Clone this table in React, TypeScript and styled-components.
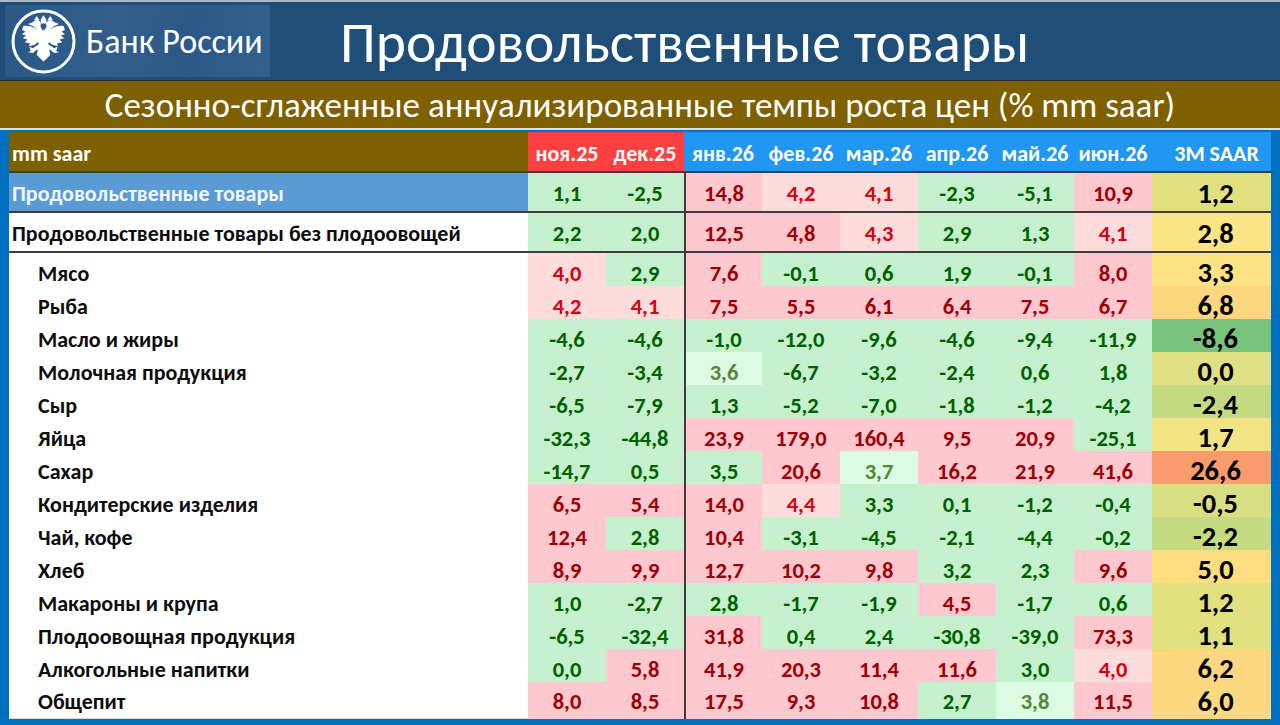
import React from "react";
import styled, { createGlobalStyle } from "styled-components";

const GlobalStyle = createGlobalStyle`
  html, body { margin: 0; padding: 0; background: #0070c0; }
  body { font-family: "Carlito", "Roboto", "Noto Sans", sans-serif; }
  * { box-sizing: border-box; }
`;

const COLS = "519px repeat(8, 78px) 119px";

const Slide = styled.div`
  width: 1280px;
  height: 725px;
  display: flex;
  flex-direction: column;
  overflow: hidden;
  background: #0070c0;
`;

const TopBar = styled.header`
  height: 80px;
  flex: none;
  background: #1f4e79;
  border-top: 2px solid #aeb8c2;
  display: flex;
  align-items: center;
  padding-left: 5px;
`;

const LogoBox = styled.div`
  width: 265px;
  height: 72px;
  display: flex;
  align-items: center;
  gap: 9px;
  padding-left: 5px;
  background: linear-gradient(100deg, #2a5987 0%, #315e8b 40%, #2c5a88 70%, #33618e 100%);
`;

const LogoText = styled.span`
  color: #ffffff;
  font-size: 34px;
  font-weight: 400;
  white-space: nowrap;
`;

const Title = styled.h1`
  margin: 0 0 0 70px;
  padding-top: 2px;
  color: #ffffff;
  font-size: 57.5px;
  font-weight: 400;
  white-space: nowrap;
`;

const SubBand = styled.div`
  height: 48px;
  flex: none;
  background: #7f6000;
  border-top: 1px solid #2a2a2a;
  display: flex;
  align-items: center;
  justify-content: center;
  color: #ffffff;
  font-size: 35px;
  font-weight: 400;
  white-space: nowrap;
`;

const Frame = styled.section`
  flex: 1;
  border-top: 2px solid #d3e2f1;
  padding: 2px 9px 10px 9px;
  background: #0070c0;
`;

const Table = styled.div`
  display: flex;
  flex-direction: column;
  background: #ffffff;
`;

const Row = styled.div<{ $h: number; $rule?: boolean }>`
  display: grid;
  grid-template-columns: ${COLS};
  height: ${(p) => p.$h}px;
  border-bottom: ${(p) => (p.$rule ? "2px solid #3d3d3d" : "none")};
`;

const HeadLabel = styled.div`
  background: #7f6000;
  color: #ffffff;
  font-weight: 700;
  font-size: 22px;
  display: flex;
  align-items: center;
  padding: 3px 0 0 3px;
`;

const HeadMonth = styled.div<{ $past?: boolean; $wide?: boolean }>`
  background: ${(p) => (p.$past ? "#ff4040" : "#2196f3")};
  color: #ffffff;
  font-weight: 700;
  font-size: 22px;
  display: flex;
  align-items: center;
  justify-content: center;
  padding: 3px 0 0 ${(p) => (p.$wide ? "10px" : "0")};
  white-space: nowrap;
`;

const Label = styled.div<{ $kind: "total" | "main" | "sub" }>`
  display: flex;
  align-items: center;
  padding: 2px 0 0 ${(p) => (p.$kind === "sub" ? "29px" : "3px")};
  font-weight: 700;
  font-size: 22px;
  white-space: nowrap;
  background: ${(p) => (p.$kind === "total" ? "#5b9bd5" : "#ffffff")};
  color: ${(p) => (p.$kind === "total" ? "#f2f6ff" : "#0d0d0d")};
  border-bottom: ${(p) => (p.$kind === "sub" ? "1px solid #d9d9d9" : "none")};
`;

type Tone = "green" | "lgreen" | "lpink" | "pink";

const toneBg: Record<Tone, string> = {
  green: "#c6efce",
  lgreen: "#dbfbe3",
  lpink: "#ffdcdc",
  pink: "#ffc7ce",
};
const toneFg: Record<Tone, string> = {
  green: "#006100",
  lgreen: "#5a8438",
  lpink: "#d80012",
  pink: "#9c0006",
};

const Value = styled.div<{ $tone: Tone; $split?: boolean }>`
  display: flex;
  align-items: center;
  justify-content: center;
  padding-top: 2px;
  font-weight: 700;
  font-size: 22.5px;
  background: ${(p) => toneBg[p.$tone]};
  color: ${(p) => toneFg[p.$tone]};
  border-left: ${(p) => (p.$split ? "2px solid #3d3d3d" : "none")};
`;

const Saar = styled.div<{ $bg: string; $rule?: boolean }>`
  display: flex;
  align-items: center;
  justify-content: center;
  padding: 2px 0 0 8px;
  font-weight: 700;
  font-size: 28.5px;
  color: #000000;
  background: ${(p) => p.$bg};
  border-bottom: ${(p) => (p.$rule ? "2px solid #2e2e2e" : "none")};
`;

const Eagle = () => {
  const half = (
    <>
      <path d="M45 38 C39 30 30 25 20 27 L18 33 L23 35 L18 39 L24 41 L19 45 L26 47 L22 51 L30 53 L28 57 L37 55 L45 48 Z" />
      <path d="M36 27 L44 40 L50 36 L44 25 Z" />
      <circle cx="40" cy="24" r="6.2" />
      <path d="M35 21 L27 24 L35 27.5 Z" />
      <path d="M36 18 L40 12 L44 18 Z" />
      <path d="M43 54 L34 60 L29 58 L31 64 L27 66 L34 67 L39 63 L46 60 Z" />
    </>
  );
  return (
    <svg width="67" height="67" viewBox="0 0 100 100" fill="#ffffff">
      <circle cx="50" cy="50" r="45.5" fill="none" stroke="#ffffff" strokeWidth="4.5" />
      <path d="M46 17 L50 11 L54 17 L54 23 L46 23 Z" />
      <ellipse cx="50" cy="46" rx="9" ry="13" />
      <path d="M43 55 L40 70 L46 76 L50 80 L54 76 L60 70 L57 55 Z" />
      {half}
      <g transform="translate(100,0) scale(-1,1)">{half}</g>
    </svg>
  );
};

type RowData = {
  label: string;
  kind: "total" | "main" | "sub";
  v: string[];
  saar: string;
  bg: string;
};

const rows: RowData[] = [
  { label: "Продовольственные товары", kind: "total", v: ["1,1", "-2,5", "14,8", "4,2", "4,1", "-2,3", "-5,1", "10,9"], saar: "1,2", bg: "#e2e07e" },
  { label: "Продовольственные товары без плодоовощей", kind: "main", v: ["2,2", "2,0", "12,5", "4,8", "4,3", "2,9", "1,3", "4,1"], saar: "2,8", bg: "#fae483" },
  { label: "Мясо", kind: "sub", v: ["4,0", "2,9", "7,6", "-0,1", "0,6", "1,9", "-0,1", "8,0"], saar: "3,3", bg: "#fce283" },
  { label: "Рыба", kind: "sub", v: ["4,2", "4,1", "7,5", "5,5", "6,1", "6,4", "7,5", "6,7"], saar: "6,8", bg: "#fdd680" },
  { label: "Масло и жиры", kind: "sub", v: ["-4,6", "-4,6", "-1,0", "-12,0", "-9,6", "-4,6", "-9,4", "-11,9"], saar: "-8,6", bg: "#79c27c" },
  { label: "Молочная продукция", kind: "sub", v: ["-2,7", "-3,4", "3,6", "-6,7", "-3,2", "-2,4", "0,6", "1,8"], saar: "0,0", bg: "#dfe083" },
  { label: "Сыр", kind: "sub", v: ["-6,5", "-7,9", "1,3", "-5,2", "-7,0", "-1,8", "-1,2", "-4,2"], saar: "-2,4", bg: "#c5da80" },
  { label: "Яйца", kind: "sub", v: ["-32,3", "-44,8", "23,9", "179,0", "160,4", "9,5", "20,9", "-25,1"], saar: "1,7", bg: "#f1e383" },
  { label: "Сахар", kind: "sub", v: ["-14,7", "0,5", "3,5", "20,6", "3,7", "16,2", "21,9", "41,6"], saar: "26,6", bg: "#f89c6c" },
  { label: "Кондитерские изделия", kind: "sub", v: ["6,5", "5,4", "14,0", "4,4", "3,3", "0,1", "-1,2", "-0,4"], saar: "-0,5", bg: "#d7df82" },
  { label: "Чай, кофе", kind: "sub", v: ["12,4", "2,8", "10,4", "-3,1", "-4,5", "-2,1", "-4,4", "-0,2"], saar: "-2,2", bg: "#c6da80" },
  { label: "Хлеб", kind: "sub", v: ["8,9", "9,9", "12,7", "10,2", "9,8", "3,2", "2,3", "9,6"], saar: "5,0", bg: "#fedd81" },
  { label: "Макароны и крупа", kind: "sub", v: ["1,0", "-2,7", "2,8", "-1,7", "-1,9", "4,5", "-1,7", "0,6"], saar: "1,2", bg: "#e1e07f" },
  { label: "Плодоовощная продукция", kind: "sub", v: ["-6,5", "-32,4", "31,8", "0,4", "2,4", "-30,8", "-39,0", "73,3"], saar: "1,1", bg: "#dfe07f" },
  { label: "Алкогольные напитки", kind: "sub", v: ["0,0", "5,8", "41,9", "20,3", "11,4", "11,6", "3,0", "4,0"], saar: "6,2", bg: "#fed780" },
  { label: "Общепит", kind: "sub", v: ["8,0", "8,5", "17,5", "9,3", "10,8", "2,7", "3,8", "11,5"], saar: "6,0", bg: "#fed880" },
];

const toneOf = (s: string): Tone => {
  const n = parseFloat(s.replace(",", "."));
  if (n >= 4.5) return "pink";
  if (n >= 4) return "lpink";
  if (n >= 3.6) return "lgreen";
  return "green";
};

const months = ["ноя.25", "дек.25", "янв.26", "фев.26", "мар.26", "апр.26", "май.26", "июн.26"];

export default function App() {
  return (
    <>
      <GlobalStyle />
      <Slide>
        <TopBar>
          <LogoBox>
            <Eagle />
            <LogoText>Банк России</LogoText>
          </LogoBox>
          <Title>Продовольственные товары</Title>
        </TopBar>
        <SubBand>Сезонно-сглаженные аннуализированные темпы роста цен (% mm saar)</SubBand>
        <Frame>
          <Table>
            <Row $h={41} $rule>
              <HeadLabel>mm saar</HeadLabel>
              {months.map((m, i) => (
                <HeadMonth key={m} $past={i < 2}>
                  {m}
                </HeadMonth>
              ))}
              <HeadMonth $wide>3M SAAR</HeadMonth>
            </Row>
            {rows.map((r, ri) => {
              const big = r.kind !== "sub";
              return (
                <Row key={r.label} $h={big ? 40 : 33} $rule={big}>
                  <Label $kind={r.kind}>{r.label}</Label>
                  {r.v.map((val, i) => (
                    <Value key={i} $tone={toneOf(val)} $split={i === 2}>
                      {val}
                    </Value>
                  ))}
                  <Saar $bg={r.bg} $rule={!big && ri < rows.length - 1}>
                    {r.saar}
                  </Saar>
                </Row>
              );
            })}
          </Table>
        </Frame>
      </Slide>
    </>
  );
}
